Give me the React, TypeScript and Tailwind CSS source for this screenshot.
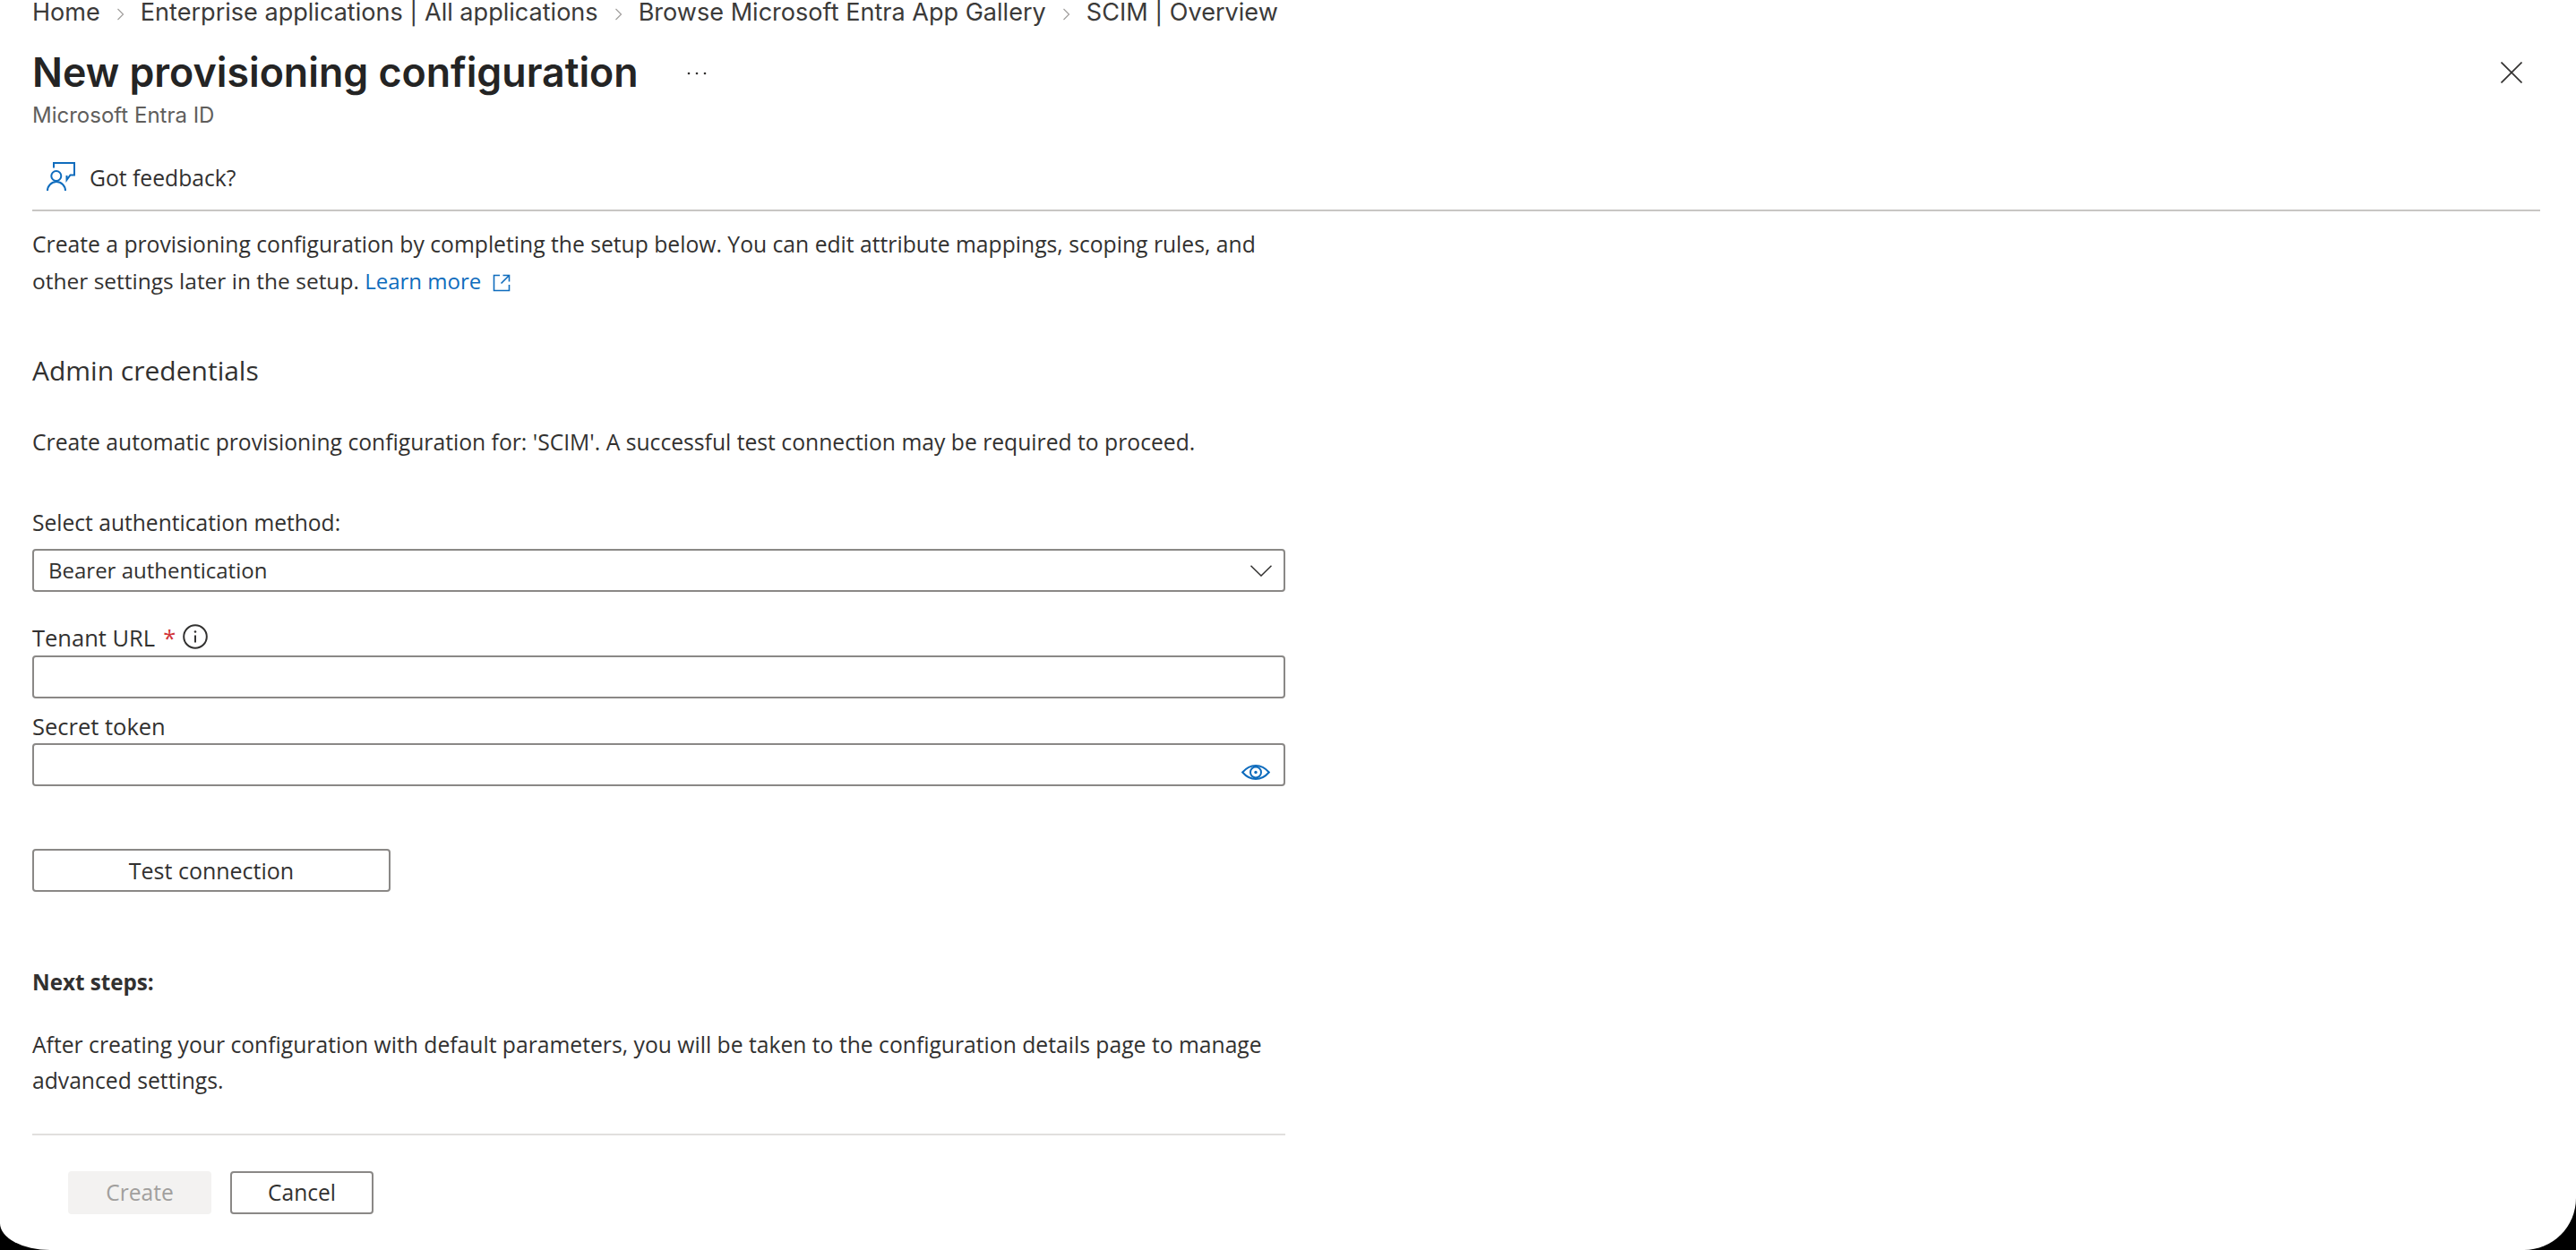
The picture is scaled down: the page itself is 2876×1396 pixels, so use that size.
import React from "react";

const body = "font-['Open_Sans',sans-serif]";
const inter = "font-['Inter',sans-serif]";

function Crumb() {
  return (
    <svg viewBox="0 0 9 14" className="h-[14px] w-[9px] mt-[3px] text-[#a19f9d]" fill="none" stroke="currentColor" strokeWidth="1.2">
      <path d="M1.5 1l6 6-6 6" />
    </svg>
  );
}

export default function App() {
  const crumbs = ["Home", "Enterprise applications | All applications", "Browse Microsoft Entra App Gallery", "SCIM | Overview"];
  return (
    <div className="h-[1396px] w-full bg-black overflow-hidden">
      <div className={`h-full bg-white rounded-bl-[56px_30px] rounded-br-[58px] pl-[36px] pr-[40px] text-[#323130] ${body}`}>
        <nav className={`flex h-[28px] items-center gap-[18px] text-[27.07px] leading-[28px] text-[#3b3a39] ${inter}`}>
          {crumbs.map((c, i) => (
            <React.Fragment key={c}>
              {i > 0 && <Crumb />}
              <span className="whitespace-nowrap">{c}</span>
            </React.Fragment>
          ))}
        </nav>

        <div className="mt-[25px] flex h-[56px] items-center justify-between pr-[20px]">
          <div className="flex items-center">
            <h1 className={`text-[44.7px] leading-[56px] font-semibold text-[#242424] whitespace-nowrap ${inter}`}>New provisioning configuration</h1>
            <svg viewBox="0 0 22 4" className="ml-[54px] mt-[2px] h-[4px] w-[22px] text-[#323130]" fill="currentColor">
              <circle cx="2" cy="2" r="1.3" />
              <circle cx="11" cy="2" r="1.3" />
              <circle cx="20" cy="2" r="1.3" />
            </svg>
          </div>
          <svg viewBox="0 0 24 24" className="h-[24px] w-[24px] text-[#323130]" fill="none" stroke="currentColor" strokeWidth="1.6">
            <path d="M0.5 0.5l23 23M23.5 0.5l-23 23" />
          </svg>
        </div>
        <div className={`mt-[4px] h-[32px] text-[24px] leading-[32px] text-[#605e5c] ${inter}`}>Microsoft Entra ID</div>

        <div className="flex h-[91px] items-start gap-[16px] border-b-2 border-[#c8c6c4] pl-[16px] pt-[36px]">
          <svg viewBox="0 0 32 32" className="h-[32px] w-[32px] text-[#0f6cbd]" fill="none" stroke="currentColor" strokeWidth="2">
            <path d="M8 6.5V1h23v13.5h-4.5l-4 5.5v-5" />
            <circle cx="10.8" cy="15.5" r="5.5" />
            <path d="M1 32a10 10 0 0 1 20 0" />
          </svg>
          <span className="mt-[2px] text-[24.7px] leading-[32px]">Got feedback?</span>
        </div>

        <p className="mt-[16px] text-[24.7px] leading-[41px] whitespace-nowrap">
          Create a provisioning configuration by completing the setup below. You can edit attribute mappings, scoping rules, and
          <br />
          <span className="text-[24.5px]">other settings later in the setup. </span>
          <a className="text-[24px] text-[#0f6cbd]">Learn more</a>
          <svg viewBox="0 0 20 20" className="ml-[13px] inline h-[20px] w-[20px] align-[-3px] text-[#0f6cbd]" fill="none" stroke="currentColor" strokeWidth="1.6">
            <path d="M8 1.5H1.5v17h17V12" />
            <path d="M11.5 1.5h7v7M18.5 1.5l-9 9" />
          </svg>
        </p>

        <h2 className="mt-[60px] text-[30px] leading-[40px] font-normal">Admin credentials</h2>
        <p className="mt-[39px] text-[24.7px] leading-[41px] whitespace-nowrap">
          Create automatic provisioning configuration for: 'SCIM'. A successful test connection may be required to proceed.
        </p>

        <div className="w-[1399px]">
          <label className="mt-[49px] block text-[24.6px] leading-[41px]">Select authentication method:</label>
          <div className="mt-[9px] flex h-[48px] items-center justify-between rounded-[4px] border-2 border-[#8a8886] pl-[16px] pr-[13px] text-[24px]">
            <span>Bearer authentication</span>
            <svg viewBox="0 0 24 13" className="h-[13px] w-[24px] text-[#323130]" fill="none" stroke="currentColor" strokeWidth="1.5">
              <path d="M0.5 0.8L12 12 23.5 0.8" />
            </svg>
          </div>

          <div className="mt-[33px] flex h-[36px] items-center text-[25.5px] leading-[36px]">
            <span>Tenant URL</span>
            <span className="ml-[9px] text-[#d13438]">*</span>
            <svg viewBox="0 0 28 28" className="ml-[8px] mb-[2px] h-[28px] w-[28px] text-[#323130]" fill="none" stroke="currentColor" strokeWidth="2">
              <circle cx="14" cy="14" r="12.8" />
              <path d="M14 12.5v8" />
              <circle cx="14" cy="8.5" r="1.3" fill="currentColor" stroke="none" />
            </svg>
          </div>
          <input className="mt-[2px] block h-[48px] w-full rounded-[4px] border-2 border-[#8a8886] bg-white" />

          <label className="mt-[13px] block h-[36px] text-[25.5px] leading-[36px]">Secret token</label>
          <div className="relative mt-[1px]">
            <input type="password" className="block h-[48px] w-full rounded-[4px] border-2 border-[#8a8886] bg-white" />
            <svg viewBox="0 0 32 17" className="absolute bottom-[7px] right-[17px] h-[17px] w-[32px] text-[#0f6cbd]" fill="none" stroke="currentColor" strokeWidth="2">
              <path d="M1.2 8.5C6 3 10.5 1 16 1s10 2 14.8 7.500C26 14 21.500 16 16 16S6 14 1.200 8.500Z" />
              <circle cx="16" cy="8.500" r="6" />
              <circle cx="16" cy="8.500" r="1.700" fill="currentColor" stroke="none" />
            </svg>
          </div>

          <button className="mt-[70px] block h-[48px] w-[400px] rounded-[4px] border-2 border-[#8a8886] bg-white pt-[1px] text-[25px] font-medium text-[#323130]">
            Test connection
          </button>

          <div className="mt-[83px] h-[36px] text-[24.2px] leading-[36px] font-bold">Next steps:</div>
          <p className="mt-[32px] text-[24.7px] leading-[40px] whitespace-nowrap">
            After creating your configuration with default parameters, you will be taken to the configuration details page to manage
            <br />
            advanced settings.
          </p>

          <div className="mt-[39px] border-t-2 border-[#e1dfdd]" />

          <div className="mt-[40px] flex gap-[21px] pl-[40px]">
            <button className="h-[48px] w-[160px] rounded-[4px] bg-[#f3f2f1] pt-[1px] text-[24.6px] font-medium text-[#a19f9d]">Create</button>
            <button className="h-[48px] w-[160px] rounded-[4px] border-2 border-[#8a8886] bg-white pt-[1px] text-[24.6px] font-medium text-[#323130]">Cancel</button>
          </div>
        </div>
      </div>
    </div>
  );
}
